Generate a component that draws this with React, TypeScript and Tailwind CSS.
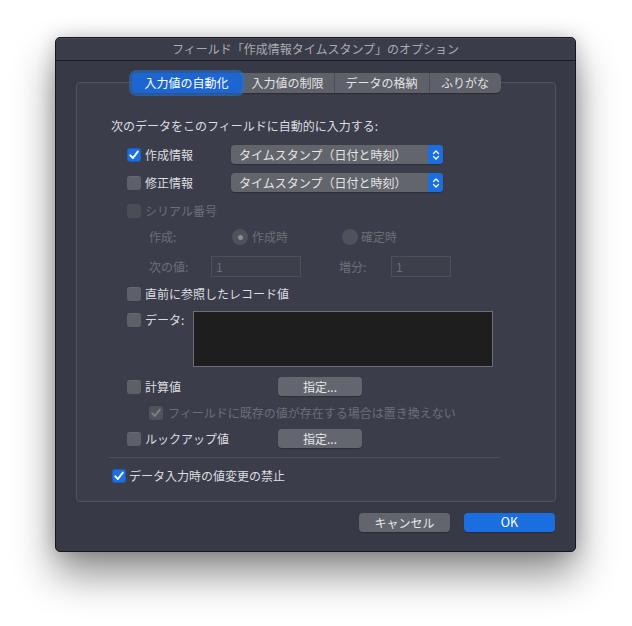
import React from "react";

const F = "font-['Noto_Sans_CJK_JP','Noto_Sans',sans-serif]";

function CheckIcon({ color }: { color: string }) {
  return (
    <svg width="14" height="14" viewBox="0 0 14 14" className="block">
      <path d="M3.3 7.3 L5.9 10 L10.8 3.6" fill="none" stroke={color} strokeWidth="1.9" strokeLinecap="round" strokeLinejoin="round" />
    </svg>
  );
}

function Box({ checked = false, disabled = false }: { checked?: boolean; disabled?: boolean }) {
  if (checked && !disabled)
    return (
      <div className="w-[14px] h-[14px] shrink-0 rounded-[3px] bg-[#1c6fde] shadow-[inset_0_0_0_1px_rgba(0,0,0,0.15)]">
        <CheckIcon color="#ffffff" />
      </div>
    );
  if (checked && disabled)
    return (
      <div className="w-[14px] h-[14px] shrink-0 rounded-[3px] bg-[#50535b]">
        <CheckIcon color="#7d8087" />
      </div>
    );
  if (disabled) return <div className="w-[14px] h-[14px] shrink-0 rounded-[3px] bg-[#4a4d56]" />;
  return <div className="w-[14px] h-[14px] shrink-0 rounded-[3px] bg-[#5d6068] shadow-[inset_0_1px_0_rgba(255,255,255,0.06)]" />;
}

function Popup() {
  return (
    <div className="w-[212px] h-[19px] flex rounded-[4px] overflow-hidden bg-[#62656c] shadow-[0_1px_1px_rgba(0,0,0,0.25)]">
      <div className="flex-1 flex items-center pl-[8px] text-[12px] text-[#e4e5e7] leading-none">タイムスタンプ（日付と時刻）</div>
      <div className="w-[15px] bg-[#1b6ee0] flex items-center justify-center">
        <svg width="8" height="12" viewBox="0 0 8 12">
          <path d="M1.5 4.5 L4 2 L6.5 4.5" fill="none" stroke="#fff" strokeWidth="1.3" strokeLinecap="round" strokeLinejoin="round" />
          <path d="M1.5 7.5 L4 10 L6.5 7.5" fill="none" stroke="#fff" strokeWidth="1.3" strokeLinecap="round" strokeLinejoin="round" />
        </svg>
      </div>
    </div>
  );
}

function Radio({ on }: { on?: boolean }) {
  return (
    <div className="w-[16px] h-[16px] shrink-0 rounded-full bg-[#4f525a] flex items-center justify-center">
      {on ? <div className="w-[5px] h-[5px] rounded-full bg-[#8b8d93]" /> : null}
    </div>
  );
}

function Btn({ children }: { children: React.ReactNode }) {
  return (
    <div className="w-[84px] h-[19px] rounded-[4px] bg-[#63666e] flex items-center justify-center text-[12px] text-[#e6e7e9] leading-none shadow-[0_1px_1px_rgba(0,0,0,0.25)]">
      {children}
    </div>
  );
}

export default function App() {
  const txt = "text-[12px] text-[#dcdde0] leading-none";
  const dis = "text-[12px] text-[#6b6e77] leading-none";
  return (
    <div className={`w-[632px] h-[626px] bg-white pl-[55px] pt-[37px] ${F}`}>
      <div className="w-[521px] h-[515px] bg-[#373a46] rounded-[5px] border border-[#16171c] shadow-[0_22px_40px_rgba(0,0,0,0.45),0_0_18px_rgba(0,0,0,0.18)] flex flex-col">
        {/* title bar */}
        <div className="h-[23px] border-b border-[#1c1e24] rounded-t-[5px] bg-[#3a3d49] shadow-[inset_0_1px_0_rgba(255,255,255,0.08)] flex items-center justify-center text-[12px] text-[#a9abb1] leading-none">
          フィールド「作成情報タイムスタンプ」のオプション
        </div>

        {/* group box */}
        <div className="mt-[21px] ml-[20px] w-[480px] h-[420px] border border-[#50535d] rounded-[4px] bg-[#3b3e4a] flex flex-col">
          {/* tabs */}
          <div className="-mt-[10px] h-[20px] flex justify-center">
            <div className="flex h-[20px] rounded-[5px] bg-[#5e6169] shadow-[0_1px_1px_rgba(0,0,0,0.3)] text-[12px] leading-none">
              <div className="w-[110px] h-[20px] rounded-[5px] bg-[#1d66d2] text-white flex items-center justify-center shadow-[0_0_0_3px_rgba(40,112,205,0.6)]">
                入力値の自動化
              </div>
              <div className="w-[93px] flex items-center justify-center text-[#e2e3e5] border-r border-[#4a4d55]">入力値の制限</div>
              <div className="w-[95px] flex items-center justify-center text-[#e2e3e5] border-r border-[#4a4d55]">データの格納</div>
              <div className="w-[71px] flex items-center justify-center text-[#e2e3e5]">ふりがな</div>
            </div>
          </div>

          {/* heading */}
          <div className={`mt-[23px] h-[20px] ml-[34px] flex items-center ${txt}`}>次のデータをこのフィールドに自動的に入力する:</div>

          {/* 作成情報 */}
          <div className="mt-[9px] h-[19px] ml-[50px] flex items-center">
            <div className="w-[104px] flex items-center gap-[4px]">
              <Box checked />
              <span className={txt}>作成情報</span>
            </div>
            <Popup />
          </div>

          {/* 修正情報 */}
          <div className="mt-[9px] h-[19px] ml-[50px] flex items-center">
            <div className="w-[104px] flex items-center gap-[4px]">
              <Box />
              <span className={txt}>修正情報</span>
            </div>
            <Popup />
          </div>

          {/* シリアル番号 */}
          <div className="mt-[9px] h-[20px] ml-[50px] flex items-center gap-[4px]">
            <Box disabled />
            <span className={dis}>シリアル番号</span>
          </div>

          {/* 作成 */}
          <div className="mt-[6px] h-[20px] ml-[72px] flex items-center">
            <div className={`w-[83px] ${dis}`}>作成:</div>
            <div className="w-[110px] flex items-center gap-[4px]">
              <Radio on />
              <span className={dis}>作成時</span>
            </div>
            <div className="flex items-center gap-[3px]">
              <Radio />
              <span className={dis}>確定時</span>
            </div>
          </div>

          {/* 次の値 */}
          <div className="mt-[9px] h-[21px] ml-[72px] flex items-center">
            <div className={`w-[62px] ${dis}`}>次の値:</div>
            <div className={`w-[90px] h-[21px] border border-[#4d505a] bg-[#3d404b] flex items-center pl-[4px] ${dis}`}>1</div>
            <div className={`ml-[38px] w-[52px] ${dis}`}>増分:</div>
            <div className={`w-[60px] h-[21px] border border-[#4d505a] bg-[#3d404b] flex items-center pl-[4px] ${dis}`}>1</div>
          </div>

          {/* 直前 */}
          <div className="mt-[7px] h-[20px] ml-[50px] flex items-center gap-[4px]">
            <Box />
            <span className={txt}>直前に参照したレコード値</span>
          </div>

          {/* データ */}
          <div className="mt-[7px] h-[56px] ml-[50px] flex items-start">
            <div className="w-[66px] h-[16px] mt-[1px] flex items-center gap-[4px]">
              <Box />
              <span className={txt}>データ:</span>
            </div>
            <div className="w-[300px] h-[56px] bg-[#1e1e1e] border border-[#6c6f76]" />
          </div>

          {/* 計算値 */}
          <div className="mt-[10px] h-[19px] ml-[50px] flex items-center">
            <div className="w-[151px] flex items-center gap-[4px]">
              <Box />
              <span className={txt}>計算値</span>
            </div>
            <Btn>指定...</Btn>
          </div>

          {/* disabled checkbox */}
          <div className="mt-[7px] h-[20px] ml-[72px] flex items-center gap-[5px]">
            <Box checked disabled />
            <span className={dis}>フィールドに既存の値が存在する場合は置き換えない</span>
          </div>

          {/* ルックアップ値 */}
          <div className="mt-[6px] h-[19px] ml-[50px] flex items-center">
            <div className="w-[151px] flex items-center gap-[4px]">
              <Box />
              <span className={txt}>ルックアップ値</span>
            </div>
            <Btn>指定...</Btn>
          </div>

          {/* separator */}
          <div className="mt-[9px] ml-[32px] w-[391px] h-px bg-[#4c4f59]" />

          {/* final */}
          <div className="mt-[8px] h-[20px] ml-[35px] flex items-center gap-[3px]">
            <Box checked />
            <span className={txt}>データ入力時の値変更の禁止</span>
          </div>
        </div>

        {/* buttons */}
        <div className="mt-[11px] pr-[20px] flex justify-end gap-[14px]">
          <div className="w-[91px] h-[19px] rounded-[4px] bg-[#62656d] flex items-center justify-center text-[12px] text-[#e6e7e9] leading-none shadow-[0_1px_1px_rgba(0,0,0,0.25)]">
            キャンセル
          </div>
          <div className="w-[91px] h-[19px] rounded-[4px] bg-[#1b6ee0] flex items-center justify-center text-[12.5px] text-white leading-none shadow-[0_1px_1px_rgba(0,0,0,0.25)]">
            OK
          </div>
        </div>
      </div>
    </div>
  );
}
